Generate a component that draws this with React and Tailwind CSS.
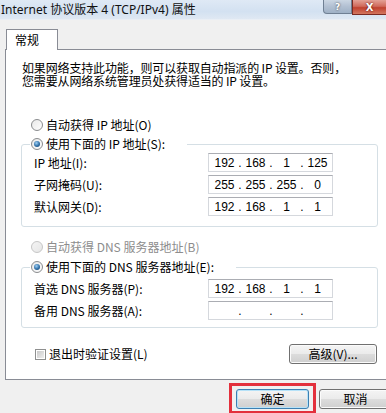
import React from "react";

const CJK = "font-['Noto_Sans_CJK_SC',sans-serif]";

function Radio({ checked, disabled }) {
  return (
    <span
      className={`relative inline-flex w-[12px] h-[12px] rounded-full border items-center justify-center shrink-0 ${
        disabled
          ? "border-[#c6c6c6] bg-gradient-to-br from-[#f4f4f4] to-[#e6e6e6]"
          : "border-[#8a8c8e] bg-gradient-to-br from-[#e9e9e9] to-[#fdfdfd]"
      }`}
    >
      {checked && (
        <span className="w-[6px] h-[6px] rounded-full bg-[radial-gradient(circle_at_40%_35%,#9ed0f5_0%,#2f6ea6_55%,#173f66_100%)]" />
      )}
    </span>
  );
}

function IpField({ parts }) {
  return (
    <div className="w-[125px] h-[19px] bg-white border border-[#d5d8dd] border-t-[#abadb3] flex items-center pl-[2px] font-['Liberation_Sans',sans-serif] text-[12px] leading-none text-black">
      {parts.map((p, i) => (
        <React.Fragment key={i}>
          <span className="w-[27px] text-center">{p}</span>
          {i < 3 && <span className="w-[4px] text-center">.</span>}
        </React.Fragment>
      ))}
    </div>
  );
}

function Row({ label, parts }) {
  return (
    <div className="h-[19px] flex items-center pl-[12px]">
      <span className="w-[174px] text-[12px] leading-none">{label}</span>
      <IpField parts={parts} />
    </div>
  );
}

function WinButton({ children, def }) {
  return (
    <div
      className={`w-[73px] h-[20px] rounded-[3px] border flex items-center justify-center text-[12px] leading-none text-black bg-[linear-gradient(to_bottom,#f4f4f4_0%,#ebebeb_48%,#dcdcdc_52%,#cfcfcf_100%)] ${
        def
          ? "border-[#3c7fb1] shadow-[inset_0_0_0_1px_#b6e2f8]"
          : "border-[#707070] shadow-[inset_0_0_0_1px_#fbfbfb]"
      }`}
    >
      {children}
    </div>
  );
}

export default function App() {
  return (
    <div className={`w-[386px] h-[413px] overflow-hidden bg-[#f0f0f0] text-black ${CJK}`}>
      {/* title bar */}
      <div className="h-[20px] flex items-start bg-[linear-gradient(to_bottom,#dfe9f5_0%,#d3e1f1_60%,#dfe8f3_100%)] border-b border-[#e9eef5]">
        <span className="pl-[1px] pt-[2px] text-[12px] leading-[16px] whitespace-nowrap font-['Noto_Sans','Noto_Sans_CJK_SC',sans-serif] text-[#111]">
          Internet 协议版本 4 (TCP/IPv4) 属性
        </span>
        <div className="ml-auto flex items-start">
          <div className="w-[29px] h-[14px] rounded-bl-[4px] border border-t-0 border-[#6f7f93] bg-[linear-gradient(to_bottom,#cbd6e3_0%,#b2c0d2_50%,#9fb1c6_100%)] flex items-center justify-center text-white text-[9px] font-bold leading-[12px] font-['DejaVu_Sans',sans-serif] [text-shadow:0_0_2px_#333]">
            ?
          </div>
          <div className="w-[34px] h-[15px] border border-t-0 border-r-0 border-[#7a2a22] bg-[linear-gradient(to_bottom,#e3a196_0%,#d06a5c_45%,#c0412f_55%,#d3765f_100%)] flex items-center justify-center text-white text-[10px] font-bold leading-[13px] font-['DejaVu_Sans',sans-serif] [text-shadow:0_0_2px_#400]">
            X
          </div>
        </div>
      </div>

      {/* tab */}
      <div className="pt-[9px] pl-[6px]">
        <div className="relative z-10 w-[52px] h-[21px] -mb-px bg-white border border-b-0 border-[#898c95] pl-[8px] pt-[3px] text-[12px] leading-[14px]">
          常规
        </div>
      </div>

      {/* panel */}
      <div className="ml-[5px] w-[392px] h-[331px] bg-white border border-[#898c95] pl-[15px]">
        <div className="w-[357px]">
          <p className="mt-[11px] ml-[1px] text-[12px] leading-[13px] whitespace-nowrap tracking-[-0.15px]">
            如果网络支持此功能，则可以获取自动指派的 IP 设置。否则，
            <br />
            您需要从网络系统管理员处获得适当的 IP 设置。
          </p>

          <div className="mt-[29px] h-[18px] flex items-center pl-[10px] text-[12px] leading-none">
            <Radio />
            <span className="ml-[3px]">自动获得 IP 地址(O)</span>
          </div>

          <fieldset className="mt-px border border-[#d5dfe5] rounded-[3px] pb-[10px]">
            <legend className="ml-[8px] pl-[1px] pr-[22px] h-[18px] flex items-center text-[12px] leading-none">
              <Radio checked />
              <span className="ml-[3px]">使用下面的 IP 地址(S):</span>
            </legend>
            <div className="flex flex-col gap-[3px]">
              <Row label="IP 地址(I):" parts={["192", "168", "1", "125"]} />
              <Row label="子网掩码(U):" parts={["255", "255", "255", "0"]} />
              <Row label="默认网关(D):" parts={["192", "168", "1", "1"]} />
            </div>
          </fieldset>

          <div className="mt-[11px] h-[18px] flex items-center pl-[10px] text-[12px] leading-none text-[#8d8d8d]">
            <Radio disabled />
            <span className="ml-[3px]">自动获得 DNS 服务器地址(B)</span>
          </div>

          <fieldset className="mt-[2px] border border-[#d5dfe5] rounded-[3px] pb-[7px]">
            <legend className="ml-[8px] pl-[1px] pr-[22px] h-[18px] flex items-center text-[12px] leading-none">
              <Radio checked />
              <span className="ml-[3px]">使用下面的 DNS 服务器地址(E):</span>
            </legend>
            <div className="mt-[3px] flex flex-col gap-[3px]">
              <Row label="首选 DNS 服务器(P):" parts={["192", "168", "1", "1"]} />
              <Row label="备用 DNS 服务器(A):" parts={["", "", "", ""]} />
            </div>
          </fieldset>

          <div className="mt-[16px] h-[20px] flex items-center justify-between pl-[14px] pr-px">
            <div className="flex items-center text-[12px] leading-none">
              <span className="w-[11px] h-[11px] border border-[#8e8f8f] bg-white p-[1px] shrink-0">
                <span className="block w-full h-full bg-gradient-to-br from-[#c9c9c9] to-[#eeeeee]" />
              </span>
              <span className="ml-[3px]">退出时验证设置(L)</span>
            </div>
            <div className="w-[88px] h-[20px] rounded-[3px] border border-[#707070] shadow-[inset_0_0_0_1px_#fbfbfb] flex items-center justify-center text-[12px] leading-none bg-[linear-gradient(to_bottom,#f4f4f4_0%,#ebebeb_48%,#dcdcdc_52%,#cfcfcf_100%)]">
              高级(V)...
            </div>
          </div>
        </div>
      </div>

      {/* bottom buttons */}
      <div className="mt-[3px] pl-[229px] flex items-center gap-[3px]">
        <div className="border-[3px] border-[#e3303c] px-[4px] pt-[3px] pb-[2px]">
          <WinButton def>确定</WinButton>
        </div>
        <div className="shrink-0 pt-px">
          <WinButton>取消</WinButton>
        </div>
      </div>
    </div>
  );
}
